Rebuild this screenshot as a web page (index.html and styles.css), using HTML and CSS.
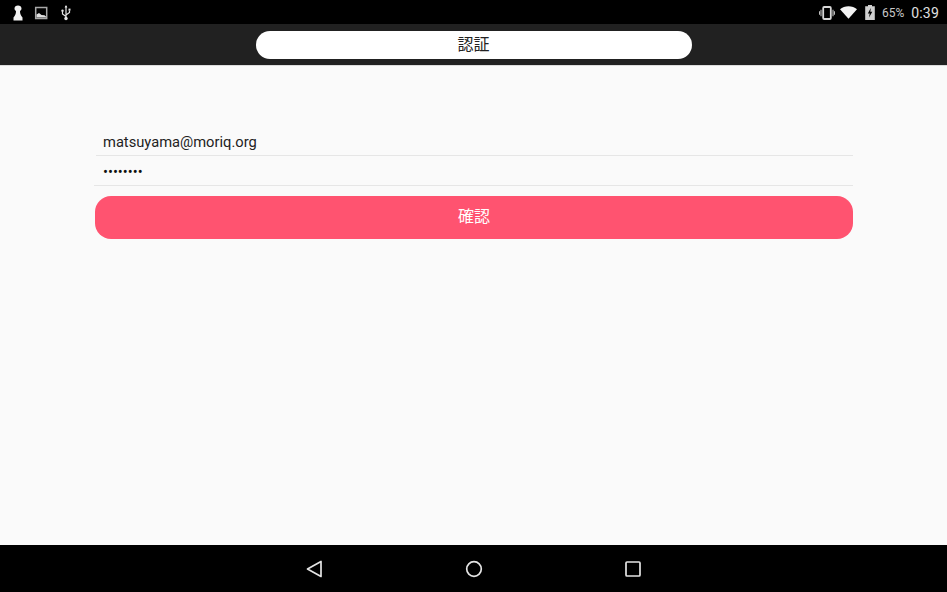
FILE: index.html
```html
<!DOCTYPE html>
<html lang="ja">
<head>
<meta charset="utf-8">
<title>認証</title>
<link rel="stylesheet" href="styles.css">
</head>
<body>
<div class="screen">
  <div class="statusbar">
    <div class="status-left">
      <svg class="ico" width="12" height="16" viewBox="0 0 12 16"><path d="M6 .5C3.900 .5 2.500 1.800 2.500 3.600 2.500 4.800 3.100 5.600 4 6.100 4 8.700 3.200 11 1.500 12.400V15.500H10.500V12.400C8.800 11 8 8.700 8 6.100 8.900 5.600 9.500 4.800 9.500 3.600 9.500 1.800 8.100 .5 6 .5Z" fill="#f2f2f2"/></svg>
      <svg class="ico" width="14" height="14" viewBox="0 0 14 14"><rect x="1.700" y="1.500" width="11" height="11" fill="none" stroke="#a8a8a8" stroke-width="1.500"/><path d="M2.500 11.500V8.500L5 7 7.500 9 10.500 9.300 12 10.500V11.500Z" fill="#e0e0e0"/></svg>
      <svg class="ico usb" width="12" height="16" viewBox="0 0 12 16"><path d="M6 1V13.500M6 11.500 2.500 9V6.500M6 10 9.500 7.500V5.500" fill="none" stroke="#e6e6e6" stroke-width="1.200"/><circle cx="6" cy="13.500" r="1.700" fill="#e6e6e6"/><path d="M6 0 4.600 2.400H7.400Z" fill="#e6e6e6"/><circle cx="2.500" cy="5.800" r="1.200" fill="#e6e6e6"/><rect x="8.500" y="3.600" width="2" height="2" fill="#e6e6e6"/></svg>
    </div>
    <div class="status-right">
      <svg class="vib" width="16" height="14" viewBox="0 0 16 14"><rect x="4.200" y="1" width="7.600" height="12" rx="1" fill="none" stroke="#d8d8d8" stroke-width="1.800"/><path d="M2 3.800V10.200M.5 5.200V8.800M14 3.800V10.200M15.500 5.200V8.800" stroke="#c0c0c0" stroke-width="1.100"/></svg>
      <svg class="wifi" width="17" height="13" viewBox="0 0 17 13"><path d="M8.500 12.800 0 3.200C2.300 1.300 5.200 .2 8.500 .2S14.700 1.300 17 3.200Z" fill="#f2f2f2"/></svg>
      <svg class="batt" width="10" height="15" viewBox="0 0 10 15"><path d="M3 0H7V1.200H9.800V15H.2V1.200H3Z" fill="#d0d0d0"/><path d="M5.800 3 2.800 8.500H4.700L4 12.500 7.300 6.700H5.300Z" fill="#000"/></svg>
      <span class="pct">65%</span>
      <span class="clock">0:39</span>
    </div>
  </div>
  <header class="appbar">
    <div class="title-pill">認証</div>
  </header>
  <main class="content">
    <form class="form">
      <div class="field field-email">matsuyama@moriq.org</div>
      <div class="field field-pass">••••••••</div>
      <div class="submit">確認</div>
    </form>
  </main>
  <nav class="navbar">
    <svg width="20" height="20" viewBox="0 0 20 20"><path d="M16 2.500V17.500L2.500 10Z" fill="none" stroke="#e4e4e4" stroke-width="1.700" stroke-linejoin="round"/></svg>
    <svg width="20" height="20" viewBox="0 0 20 20"><circle cx="10" cy="10" r="7.300" fill="none" stroke="#e4e4e4" stroke-width="1.700"/></svg>
    <svg width="20" height="20" viewBox="0 0 20 20"><rect x="3" y="3" width="14" height="14" rx="1" fill="none" stroke="#e4e4e4" stroke-width="1.700"/></svg>
  </nav>
</div>
</body>
</html>
```
FILE: styles.css
```css
* { box-sizing: border-box; }
html, body { margin: 0; padding: 0; }
body { font-family: Roboto, "Noto Sans CJK JP", sans-serif; background: #fafafa; }
.screen { width: 947px; height: 592px; display: flex; flex-direction: column; overflow: hidden; }
.statusbar { height: 24px; flex: none; background: #000; display: flex; justify-content: space-between; align-items: center; padding: 1px 8px 0 12px; color: #d8d8d8; }
.status-left { display: flex; align-items: center; gap: 10px; }
.usb { margin-left: 2px; }
.status-right { display: flex; align-items: center; }
.vib { margin-right: 5px; }
.wifi { margin-right: 8px; }
.batt { margin-right: 7px; }
.pct { font-size: 12px; margin-right: 7px; color: #c8c8c8; }
.clock { font-size: 14px; letter-spacing: .2px; color: #e0e0e0; }
.appbar { height: 42px; flex: none; background: #212121; display: flex; justify-content: center; align-items: center; padding-top: 1px; border-bottom: 1px solid #dcdcdc; }
.title-pill { width: 436px; height: 28px; background: #fff; border-radius: 14px; color: #222; font-size: 16px; line-height: 28px; text-align: center; }
.content { flex: 1; background: #fafafa; padding: 60px 94px 0; }
.form { display: flex; flex-direction: column; }
.field { color: #222; font-size: 14.700px; border-bottom: 1px solid #e6e6e6; }
.field-email { height: 30px; line-height: 32px; margin-left: 2px; padding-left: 7px; }
.field-pass { height: 30px; line-height: 32px; padding-left: 9px; color: #111; }
.submit { margin-top: 10px; margin-left: 1px; height: 43px; background: #ff5370; border-radius: 16px; color: #fff; font-size: 16px; line-height: 42px; text-align: center; }
.navbar { height: 47px; flex: none; background: #000; display: flex; justify-content: center; align-items: center; gap: 139px; }
```
